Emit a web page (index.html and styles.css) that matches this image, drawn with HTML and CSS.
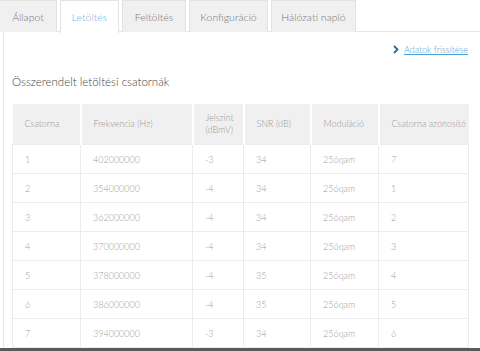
FILE: index.html
```html
<!DOCTYPE html>
<html lang="hu">
<head>
  <meta charset="UTF-8" />
  <title>Letöltés</title>
  <link rel="stylesheet" href="styles.css">
</head>
<body>
  <div class="tab-buttons">
    <div class="tab-btn t1">Állapot</div>
    <div class="tab-btn t2 active">Letöltés</div>
    <div class="tab-btn t3">Feltöltés</div>
    <div class="tab-btn t4">Konfiguráció</div>
    <div class="tab-btn t5">Hálózati napló</div>
  </div>

  <div class="panel">
    <div class="refresh">
      <svg width="6" height="9" viewBox="0 0 6 9"><path d="M1 1 L4.5 4.5 L1 8" fill="none" stroke="#1b6fa8" stroke-width="1.8"/></svg>
      <a href="#">Adatok frissítése</a>
    </div>

    <h2>Összerendelt letöltési csatornák</h2>

    <table class="channels">
      <colgroup>
        <col style="width:68px"><col style="width:112px"><col style="width:51px">
        <col style="width:67px"><col style="width:68px"><col style="width:90px">
      </colgroup>
      <thead>
        <tr>
          <th>Csatorna</th>
          <th>Frekvencia (Hz)</th>
          <th>Jelszint<br>(dBmV)</th>
          <th>SNR (dB)</th>
          <th>Moduláció</th>
          <th>Csatorna azonosító</th>
        </tr>
      </thead>
      <tbody>
        <tr><td>1</td><td>402000000</td><td>-3</td><td>34</td><td>256qam</td><td>7</td></tr>
        <tr><td>2</td><td>354000000</td><td>-4</td><td>34</td><td>256qam</td><td>1</td></tr>
        <tr><td>3</td><td>362000000</td><td>-4</td><td>34</td><td>256qam</td><td>2</td></tr>
        <tr><td>4</td><td>370000000</td><td>-4</td><td>34</td><td>256qam</td><td>3</td></tr>
        <tr><td>5</td><td>378000000</td><td>-4</td><td>35</td><td>256qam</td><td>4</td></tr>
        <tr><td>6</td><td>386000000</td><td>-4</td><td>35</td><td>256qam</td><td>5</td></tr>
        <tr><td>7</td><td>394000000</td><td>-3</td><td>34</td><td>256qam</td><td>6</td></tr>
      </tbody>
    </table>
  </div>
  <div class="bottom-bar"></div>
</body>
</html>
```

FILE: styles.css
```css
body {
  margin: 0;
  font-family: Lato, "Open Sans", Arial, sans-serif;
  font-weight: 300;
  background: #fff;
  color: #999;
  width: 480px;
  height: 351px;
  overflow: hidden;
  position: relative;
}
.tab-buttons {
  display: flex;
  gap: 3px;
  height: 32px;
  position: relative;
  z-index: 1;
}
.tab-btn {
  height: 32px;
  box-sizing: border-box;
  background: #f0f0f0;
  border: 1px solid #e3e3e3;
  border-bottom: none;
  font-size: 10.5px;
  color: #777;
  display: flex;
  align-items: center;
  justify-content: center;
}
.t1 { width: 58px; margin-left: -1px; }
.t2 { width: 59px; }
.t3 { width: 64px; }
.t4 { width: 79px; }
.t5 { width: 85px; }
.tab-btn.active {
  background: #fff;
  color: #7bb3d8;
  height: 33px;
}
.panel {
  margin-left: 3px;
  border-left: 1px solid #e6e6e6;
  border-top: 1px solid #e6e6e6;
  margin-top: -1px;
  padding: 10px 0 0 8px;
  height: 340px;
  box-sizing: border-box;
}
.refresh {
  display: flex;
  justify-content: flex-end;
  align-items: center;
  gap: 5px;
  padding-right: 12px;
  height: 14px;
  font-size: 9px;
}
.refresh a {
  color: #4a9fd2;
  text-decoration: underline;
}
h2 {
  margin: 16px 0 0 0;
  font-size: 11.5px;
  font-weight: 300;
  color: #444;
  height: 20px;
  line-height: 20px;
}
.channels {
  margin-top: 12px;
  border-collapse: collapse;
  table-layout: fixed;
  width: 456px;
  font-size: 9px;
}
.channels th {
  background: #f0f0f0;
  height: 40px;
  padding: 0 0 0 12px;
  text-align: left;
  font-weight: 300;
  color: #999;
  border-right: 2px solid #fff;
  line-height: 12px;
}
.channels th:last-child {
  border-right: none;
}
.channels td {
  height: 28px;
  padding: 0 0 0 12px;
  border: 1px solid #ececec;
  color: #a0a0a0;
}
.bottom-bar {
  position: absolute;
  left: 0;
  right: 0;
  bottom: 0;
  height: 3px;
  background: #5a5a5a;
}
```
